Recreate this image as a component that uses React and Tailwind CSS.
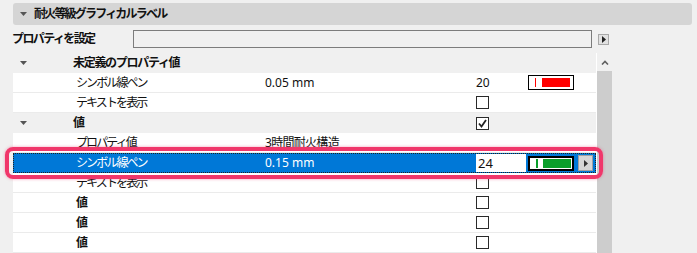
const JP = "tracking-[-1.9px]"

function Tri({ className = "" }) {
  return (
    <svg width="7" height="4" viewBox="0 0 7 4" className={className}>
      <path d="M0 0h7L3.5 4z" fill="#555" />
    </svg>
  )
}

function Check({ checked }) {
  return (
    <div className="flex h-[13px] w-[13px] items-center justify-center border border-[#2a2a2a] bg-white">
      {checked && (
        <svg width="11" height="11" viewBox="0 0 11 11">
          <path d="M2 5.5l2.5 3L9 2" fill="none" stroke="#222" strokeWidth="1.8" />
        </svg>
      )}
    </div>
  )
}

function Pen({ color }) {
  return (
    <div className="flex h-[15px] w-[46px] items-center border-[1.5px] border-black bg-white pl-[6px]">
      <div className="h-[9px] w-[1px]" style={{ background: color }} />
      <div className="ml-[6px] h-[9px] w-[28px]" style={{ background: color }} />
    </div>
  )
}

function GroupRow({ label, extra }) {
  return (
    <div className="flex h-[20px] items-center bg-[#f0f0f0]">
      <div className="flex w-[60px] pl-[7px]">
        <Tri />
      </div>
      <div className="w-[403px] font-bold tracking-[-1.3px]">{label}</div>
      <div>{extra}</div>
    </div>
  )
}

function Row({ label, value, third, fourth }) {
  return (
    <div className="flex h-[20px] items-center border-b border-[#ebebeb] bg-white">
      <div className={`w-[252px] pl-[63px] ${JP}`}>{label}</div>
      <div className="w-[211px]">{value}</div>
      <div className="w-[52px]">{third}</div>
      <div>{fourth}</div>
    </div>
  )
}

export default function App() {
  return (
    <div
      className="relative h-[253px] w-[697px] overflow-hidden bg-[#f0f0f0] text-[12px] leading-none text-[#111]"
      style={{ fontFamily: '"Noto Sans", "Noto Sans CJK JP", sans-serif' }}
    >
      <div className="pt-[3px]">
        <div className="ml-[13px] flex h-[22px] w-[679px] items-center rounded-[3px] bg-[#d5d5d5]">
          <Tri className="ml-[7px]" />
          <span className="ml-[7px] font-bold tracking-[-1.8px]">耐火等級グラフィカルラベル</span>
        </div>
      </div>

      <div className="mt-[5px] flex h-[18px] items-center">
        <div className="w-[133px] pl-[12px] font-bold tracking-[-1.6px]">プロパティを設定</div>
        <div className="h-[18px] w-[459px] border border-[#7c7c7c] bg-[#f0f0f0]" />
        <div className="ml-[6px] flex h-[11px] w-[11px] items-center justify-center border border-[#a8a8a8] bg-[#e1e1e1]">
          <svg width="4" height="7" viewBox="0 0 4 7">
            <path d="M0 0l4 3.5L0 7z" fill="#222" />
          </svg>
        </div>
      </div>

      <div className="mt-[5px] flex">
        <div className="ml-[13px] w-[584px] border-r border-white">
          <GroupRow label="未定義のプロパティ値" />
          <Row label="シンボル線ペン" value="0.05 mm" third="20" fourth={<Pen color="#ff0000" />} />
          <Row label="テキストを表示" third={<Check />} />
          <GroupRow label="値" extra={<Check checked />} />
          <Row label="プロパティ値" value={<span className="tracking-[-0.7px]">3時間耐火構造</span>} />

          <div className="flex h-[20px] items-center border border-dotted border-[#222] bg-[#0078d7] text-white">
            <div className={`w-[251px] pl-[62px] ${JP}`}>シンボル線ペン</div>
            <div className="w-[211px]">0.15 mm</div>
            <div className="flex h-[18px] w-[50px] items-center bg-white pl-[2px] text-[13px] text-[#111]">24</div>
            <div className="ml-[2px]">
              <div className="flex h-[15px] w-[46px] items-center border-2 border-black bg-white pl-[6px]">
                <div className="h-[9px] w-[2px] bg-[#0a9e2a]" />
                <div className="ml-[5px] h-[9px] w-[28px] bg-[#0a9e2a]" />
              </div>
            </div>
            <div className="ml-[4px] flex h-[16px] w-[15px] items-center justify-center border border-[#a0a0a0] bg-[#d6d6d6]">
              <svg width="4" height="7" viewBox="0 0 4 7">
                <path d="M0 0l4 3.5L0 7z" fill="#333" />
              </svg>
            </div>
          </div>

          <Row label="テキストを表示" third={<Check />} />
          <Row label={<span className="font-bold">値</span>} third={<Check />} />
          <Row label={<span className="font-bold">値</span>} third={<Check />} />
          <Row label={<span className="font-bold">値</span>} third={<Check />} />
        </div>

        <div className="flex w-[15px] flex-col">
          <div className="flex h-[18px] items-center justify-center">
            <svg width="8" height="5" viewBox="0 0 8 5">
              <path d="M1 4.5L4 1.5l3 3" fill="none" stroke="#606060" strokeWidth="1.6" />
            </svg>
          </div>
          <div className="h-[200px] bg-[#cdcdcd]" />
        </div>
      </div>

      <div className="pointer-events-none absolute left-[5px] top-[147px] h-[32px] w-[598px] rounded-[8px] border-[4px] border-[#f0376b] shadow-[0_0_3px_rgba(240,55,107,0.5)]" />
    </div>
  )
}
